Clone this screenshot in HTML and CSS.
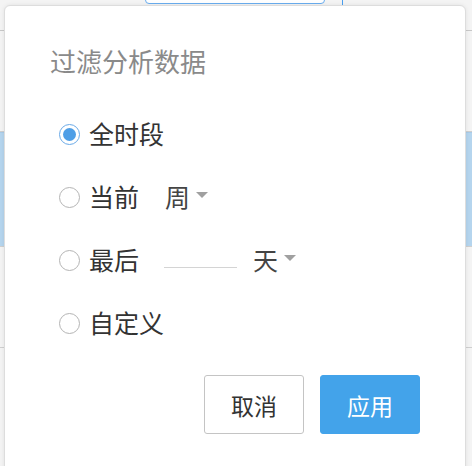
FILE: index.html
```html
<!DOCTYPE html>
<html lang="zh-CN">
<head>
    <meta charset="UTF-8" />
    <title>过滤分析数据</title>
    <link rel="stylesheet" href="styles.css">
</head>
<body>
    <div class="backdrop">
        <div class="bg-top">
            <div class="bg-input"></div>
            <div class="bg-tick"></div>
        </div>
        <div class="bg-row"></div>
        <div class="bg-row selected"></div>
        <div class="bg-row"></div>
        <div class="bg-row last"></div>
    </div>

    <div class="popover">
        <h2 class="popover-title">过滤分析数据</h2>
        <div class="options">
            <label class="option">
                <span class="radio checked"></span>
                <span class="option-text">全时段</span>
            </label>
            <label class="option">
                <span class="radio"></span>
                <span class="option-text">当前</span>
                <span class="select select-current">周<span class="caret"></span></span>
            </label>
            <label class="option">
                <span class="radio"></span>
                <span class="option-text">最后</span>
                <span class="line-input"></span>
                <span class="select select-last">天<span class="caret"></span></span>
            </label>
            <label class="option">
                <span class="radio"></span>
                <span class="option-text">自定义</span>
            </label>
        </div>
        <div class="actions">
            <button class="btn btn-cancel">取消</button>
            <button class="btn btn-apply">应用</button>
        </div>
    </div>
</body>
</html>
```

FILE: styles.css
```css
:root {
    --primary-color: #43a3ea;
    --text-color: #333333;
    --muted-color: #8a8a8a;
    --border-color: #cccccc;
}
body {
    margin: 0;
    font-family: "Noto Sans CJK SC", "Noto Sans", sans-serif;
    color: var(--text-color);
    background-color: #f4f4f4;
    height: 466px;
    overflow: hidden;
    position: relative;
}

/* page behind the popover */
.backdrop { display: flex; flex-direction: column; }
.bg-top {
    height: 30px;
    border-bottom: 1px solid #c8c8c8;
    position: relative;
}
.bg-input {
    position: absolute;
    left: 145px;
    top: -6px;
    width: 178px;
    height: 8px;
    border: 1px solid #6aaef0;
    border-radius: 4px;
    background: #fff;
}
.bg-tick {
    position: absolute;
    left: 342px;
    top: 0;
    width: 1px;
    height: 6px;
    background: #4a9ff0;
}
.bg-row { height: 100px; border-bottom: 1px solid #cfcfcf; }
.bg-row.selected { height: 113px; background: #b5d5ee; border-top: 1px solid #a9cbe8; }
.bg-row.last { height: 89px; border-bottom: none; }

.popover {
    position: absolute;
    left: 4px;
    top: 5px;
    width: 462px;
    height: 470px;
    background: #fff;
    border: 1px solid #dddddd;
    border-radius: 6px;
    box-shadow: 0 0 4px rgba(0,0,0,0.08);
    box-sizing: border-box;
    padding: 40px 45px 0 45px;
}
.popover-title {
    margin: 0;
    font-size: 26px;
    line-height: 30px;
    font-weight: 400;
    color: var(--muted-color);
}
.options {
    display: flex;
    flex-direction: column;
    margin-top: 27px;
    padding-left: 9px;
}
.option {
    display: flex;
    align-items: center;
    height: 63px;
    font-size: 25px;
}
.option-text, .select { padding-bottom: 4px; }
.radio {
    width: 21px;
    height: 21px;
    border: 1px solid #b4b4b4;
    border-radius: 50%;
    box-sizing: border-box;
    margin-right: 9px;
    flex-shrink: 0;
    position: relative;
}
.radio.checked { border-color: #6aaae8; }
.radio.checked::after {
    content: "";
    position: absolute;
    left: 3px;
    top: 3px;
    width: 13px;
    height: 13px;
    border-radius: 50%;
    background: #4e9ee6;
}
.select {
    display: inline-flex;
    align-items: center;
    color: #444;
    font-size: 25px;
}
.select-current { margin-left: 26px; }
.select-last { margin-left: 16px; }
.caret {
    width: 0;
    height: 0;
    border-left: 6px solid transparent;
    border-right: 6px solid transparent;
    border-top: 6px solid #a0a0a0;
    margin-left: 6px;
    margin-top: -2px;
}
.line-input {
    width: 73px;
    height: 14px;
    margin-left: 25px;
    border-bottom: 1px solid #d4d4d4;
}
.actions {
    display: flex;
    justify-content: flex-end;
    gap: 16px;
    margin-top: 20px;
}
.btn {
    width: 100px;
    height: 59px;
    font-family: inherit;
    font-size: 23px;
    border-radius: 3px;
    cursor: pointer;
}
.btn-cancel {
    background: #fff;
    color: var(--text-color);
    border: 1px solid #c4c4c4;
}
.btn-apply {
    background: var(--primary-color);
    color: #fff;
    border: 1px solid var(--primary-color);
}
```
